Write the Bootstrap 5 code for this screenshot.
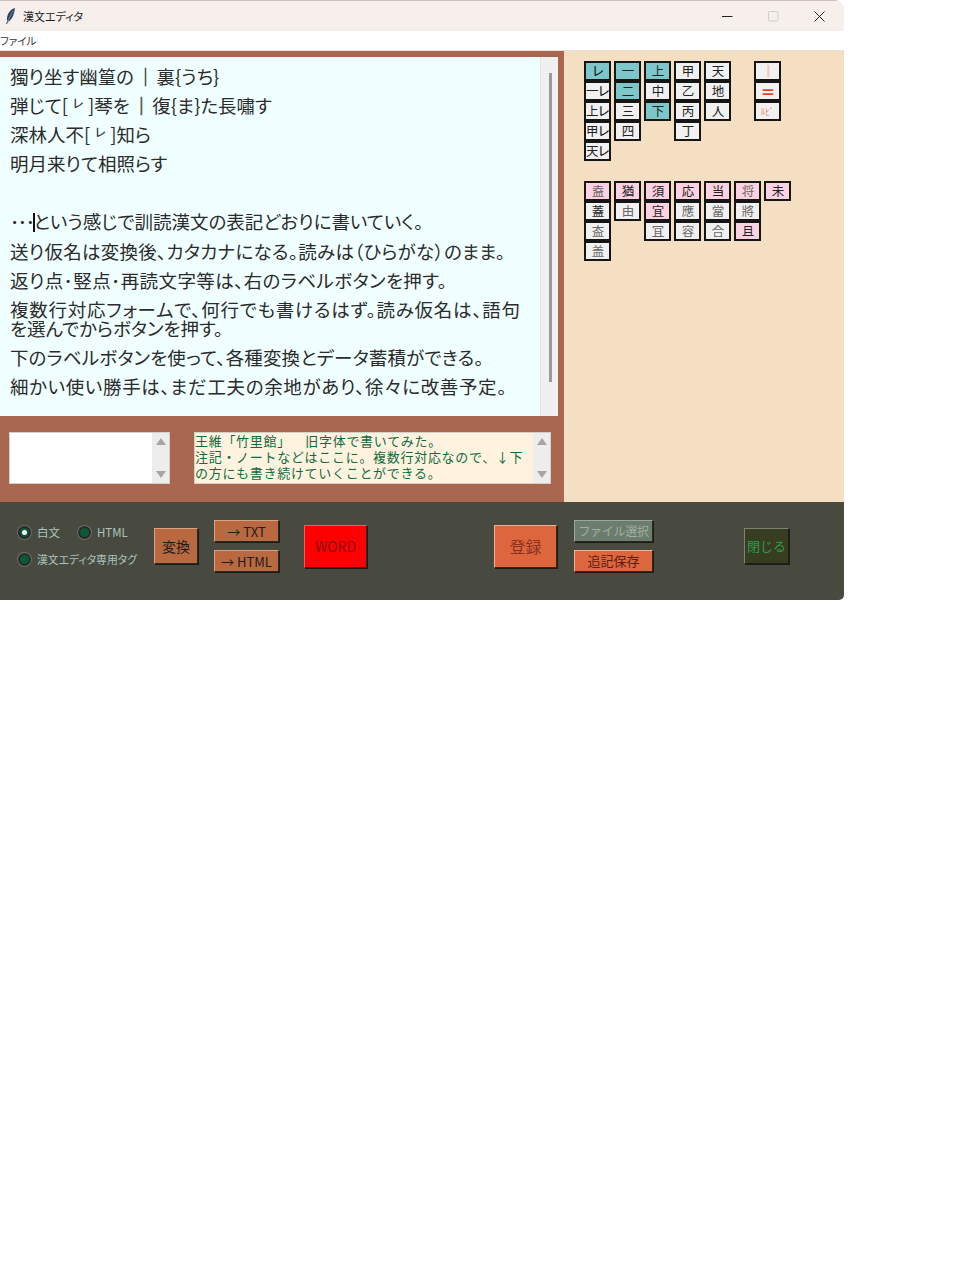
<!DOCTYPE html>
<html lang="ja">
<head>
<meta charset="utf-8">
<title>漢文エディタ</title>
<link rel="stylesheet" href="https://cdn.jsdelivr.net/npm/bootstrap@5.3.0/dist/css/bootstrap.min.css">
<style>
html,body{margin:0;background:#fff;font-family:"Noto Sans CJK JP","Liberation Sans",sans-serif;}
.win{width:844px;height:600px;border-top-right-radius:9px;border-bottom-right-radius:5px;overflow:hidden;color:#222;font-feature-settings:"palt";}
.tbar{height:31px;background:#f6efeb;border-top:1px solid #c9c4c0;font-size:11px;color:#222;padding-left:5px;}
.tbar .ttl{margin-left:7px;}
.wctls{margin-right:2px;}
.wctl{width:46px;height:30px;}
.mbar{height:20px;background:#fff;font-size:10.5px;line-height:20px;color:#333;border-bottom:1px solid #e8e0d8;}
.mid{height:451px;background:#a9674f;}
.lpane{width:564px;}
.rpane{width:280px;background:#f5dfc2;padding:10px 0 0 20px;}
.edit{height:359px;margin-top:6px;width:558px;background:#f0ffff;}
.etext{width:540px;padding:10px 0 0 10px;font-size:18.5px;line-height:19px;color:#2b2b2b;}
.etext p{margin:0 0 10px;white-space:nowrap;}
.etext p.blank{height:19px;}
.kten{font-size:12px;vertical-align:5px;line-height:0;margin:0 4px;}
.vbar{color:#333;margin:0 2px;text-shadow:.6px 0 0 #333;}
.dots{letter-spacing:-1.4px;}
.caret{display:inline-block;width:2px;height:19px;background:#111;vertical-align:-3px;margin:0 -1px 0 -1px;}
.ls1{letter-spacing:.25px;}
.ls2{letter-spacing:.4px;}
.ls3{letter-spacing:.75px;}
.ls4{letter-spacing:.15px;}
.ls5{letter-spacing:.64px;}
.sb{width:18px;background:#f0f0f0;border-left:1px solid #e6e6e6;}
.thumb{width:3px;height:309px;background:#9b9b9b;margin:16px 0 0 8px;}
.lower{padding:16px 7px 0 9px;gap:24px;}
.tbox{height:52px;border:1px solid #d4cfc8;}
.tbox-a{width:161px;background:#fff;}
.tbox-b{width:357px;background:#fff3df;}
.tbox .inner{padding:0;font-size:13px;line-height:16px;color:#0d6b41;white-space:pre;letter-spacing:.7px;font-feature-settings:normal;}
.vsb{width:17px;background:#ededed;padding:5px 0;}
.tri-u,.tri-d{width:0;height:0;border-left:5px solid transparent;border-right:5px solid transparent;}
.tri-u{border-bottom:7px solid #a6a6a6;}
.tri-d{border-top:7px solid #a6a6a6;}
.kgroup{gap:3px;align-items:flex-start;}
.kcol{display:flex;flex-direction:column;width:27px;}
.kcol.kgap{margin-left:20px;}
.kk{display:flex;align-items:center;justify-content:center;height:20px;background:#f1f1f1;border:2px solid #151515;font-size:12.5px;line-height:1;color:#222;white-space:nowrap;padding:0;letter-spacing:-1px;font-feature-settings:normal;}
.teal{background:#7dc7cb;}
.pnk{background:#fcd2e2;}
.gry{color:#666;}
.red1{color:#f28a7d;text-shadow:1px 0 0 #f6a99d;}
.red2{color:#f0402a;font-weight:900;font-size:15px;}
.red3{color:#f07f70;font-size:9px;letter-spacing:0;}
.group2{margin-top:20px;}
.foot{height:98px;background:#484a40;padding:0 0 10px 18px;}
.bv{border:1px solid;border-color:#d9a084 #2a2a22 #2a2a22 #d9a084;box-shadow:1px 1px 0 #1d1d18;padding:0;border-radius:0;white-space:nowrap;}
.opts{width:136px;color:#a9c4bd;font-size:11.5px;white-space:nowrap;}
.opt-tag{font-size:10.8px;}
.optrow{height:27px;gap:6px;}
.rad{appearance:none;width:13px;height:13px;border-radius:50%;background:#0a5a38;border:2px solid #2a2a2a;box-shadow:0 0 0 1px #6b7068;margin:0;flex:none;}
.rad:checked{background:radial-gradient(circle,#fff 0 2px,#0a5a38 3px);}
.rad2{margin-left:12px;}
.b-conv{width:44px;height:36px;background:#b9683f;color:#1c1c1c;font-size:14px;}
.stack{gap:8px;}
.b-s{width:65px;height:22px;background:#b9683f;color:#1c1c1c;font-size:13px;line-height:1;}
.b-word{width:63px;height:43px;background:#fe0000;color:#8a0f10;font-size:14px;border-color:#f25c5c #2a2a22 #2a2a22 #f25c5c;}
.b-reg{width:63px;height:43px;background:#dd663c;color:#8e2f22;font-size:16px;border-color:#eeb298 #2a2a22 #2a2a22 #eeb298;}
.b-file{width:79px;height:22px;background:#6c7c6d;color:#9eb3a1;font-size:12px;letter-spacing:-.3px;border-color:#9aa89a #2a2a22 #2a2a22 #9aa89a;}
.b-add{width:79px;height:22px;background:#dd663c;color:#5d1d15;font-size:13px;border-color:#eeb298 #2a2a22 #2a2a22 #eeb298;}
.b-close{width:45px;height:36px;background:#363d20;color:#2f9a4f;font-size:13px;border-color:#7d8273 #20201a #20201a #7d8273;}
.sp1{margin-left:16px;}
.sp2{margin-left:25px;}
.sp3{margin-left:127px;}
.sp4{margin-left:17px;}
.sp5{margin-left:91px;}
</style>
</head>
<body>
<div class="win d-flex flex-column">
  <div class="tbar d-flex align-items-center">
    <svg width="11" height="18" viewBox="0 0 11 18"><path d="M10 1C6 2 2.500 6 2 11c-.2 1.500 0 2.500.5 3L1 17h1l1.300-2.500C6 14 9 9 10 1z" fill="#2d4a68"/><path d="M8 4 3 14" stroke="#9ab" stroke-width=".6"/></svg>
    <span class="ttl">漢文エディタ</span>
    <div class="ms-auto d-flex wctls">
      <div class="wctl d-flex align-items-center justify-content-center"><svg width="11" height="11" viewBox="0 0 11 11"><path d="M0 5.500h10.500" stroke="#222" stroke-width="1"/></svg></div>
      <div class="wctl d-flex align-items-center justify-content-center"><svg width="11" height="11" viewBox="0 0 11 11"><rect x=".5" y=".5" width="9.500" height="9.500" rx="1.200" fill="none" stroke="#cfcbc8"/></svg></div>
      <div class="wctl d-flex align-items-center justify-content-center"><svg width="11" height="11" viewBox="0 0 11 11"><path d="M.5.500l10 10M10.500.5l-10 10" stroke="#222" stroke-width="1"/></svg></div>
    </div>
  </div>
  <div class="mbar">ファイル</div>
  <div class="mid d-flex">
    <div class="lpane d-flex flex-column">
      <div class="edit d-flex">
        <div class="etext">
          <p>獨り坐す幽篁の<span class="vbar">｜</span>裏{うち}</p>
          <p>弾じて[<span class="kten">㆑</span>]琴を<span class="vbar">｜</span>復{ま}た長嘯す</p>
          <p>深林人不[<span class="kten">㆑</span>]知ら</p>
          <p>明月来りて相照らす</p>
          <p class="blank"></p>
          <p><span class="dots">･･･</span><span class="caret"></span>という感じで訓読漢文の表記どおりに書いていく。</p>
          <p class="ls1">送り仮名は変換後、カタカナになる。読みは（ひらがな）のまま。</p>
          <p class="ls2">返り点･竪点･再読文字等は、右のラベルボタンを押す。</p>
          <p><span class="ls3">複数行対応フォームで、何行でも書けるはず。読み仮名は、語句</span><br>を選んでからボタンを押す。</p>
          <p class="ls4">下のラベルボタンを使って、各種変換とデータ蓄積ができる。</p>
          <p class="ls5">細かい使い勝手は、まだ工夫の余地があり、徐々に改善予定。</p>
        </div>
        <div class="sb flex-grow-1"><div class="thumb"></div></div>
      </div>
      <div class="lower d-flex">
        <div class="tbox tbox-a d-flex">
          <div class="flex-grow-1"></div>
          <div class="vsb d-flex flex-column align-items-center justify-content-between"><div class="tri-u"></div><div class="tri-d"></div></div>
        </div>
        <div class="tbox tbox-b d-flex">
          <div class="inner flex-grow-1">王維「竹里館」　  旧字体で書いてみた。
注記・ノートなどはここに。複数行対応なので、↓下
の方にも書き続けていくことができる。</div>
          <div class="vsb d-flex flex-column align-items-center justify-content-between"><div class="tri-u"></div><div class="tri-d"></div></div>
        </div>
      </div>
    </div>
    <div class="rpane">
      <div class="d-flex kgroup">
        <div class="kcol"><span class="kk teal">㆑</span><span class="kk">一㆑</span><span class="kk">上㆑</span><span class="kk">甲㆑</span><span class="kk">天㆑</span></div>
        <div class="kcol"><span class="kk teal">一</span><span class="kk teal">二</span><span class="kk">三</span><span class="kk">四</span></div>
        <div class="kcol"><span class="kk teal">上</span><span class="kk">中</span><span class="kk teal">下</span></div>
        <div class="kcol"><span class="kk">甲</span><span class="kk">乙</span><span class="kk">丙</span><span class="kk">丁</span></div>
        <div class="kcol"><span class="kk">天</span><span class="kk">地</span><span class="kk">人</span></div>
        <div class="kcol kgap"><span class="kk red1">｜</span><span class="kk red2">＝</span><span class="kk red3">ﾙﾋﾞ</span></div>
      </div>
      <div class="d-flex kgroup group2">
        <div class="kcol"><span class="kk pnk gry">盍</span><span class="kk">蓋</span><span class="kk gry">盇</span><span class="kk gry">盖</span></div>
        <div class="kcol"><span class="kk pnk">猶</span><span class="kk gry">由</span></div>
        <div class="kcol"><span class="kk pnk">須</span><span class="kk pnk">宜</span><span class="kk gry">冝</span></div>
        <div class="kcol"><span class="kk pnk">応</span><span class="kk gry">應</span><span class="kk gry">容</span></div>
        <div class="kcol"><span class="kk pnk">当</span><span class="kk gry">當</span><span class="kk gry">合</span></div>
        <div class="kcol"><span class="kk pnk gry">将</span><span class="kk gry">將</span><span class="kk pnk">且</span></div>
        <div class="kcol"><span class="kk pnk">未</span></div>
      </div>
    </div>
  </div>
  <div class="foot d-flex align-items-center">
    <div class="opts d-flex flex-column">
      <div class="d-flex align-items-center optrow"><input class="rad" type="radio" name="fmt" checked><span>白文</span><input class="rad rad2" type="radio" name="fmt"><span>HTML</span></div>
      <div class="d-flex align-items-center optrow"><input class="rad" type="radio" name="fmt"><span class="opt-tag">漢文エディタ専用タグ</span></div>
    </div>
    <button class="btn bv b-conv">変換</button>
    <div class="d-flex flex-column stack sp1">
      <button class="btn bv b-s">→ TXT</button>
      <button class="btn bv b-s">→ HTML</button>
    </div>
    <button class="btn bv b-word sp2">WORD</button>
    <button class="btn bv b-reg sp3">登録</button>
    <div class="d-flex flex-column stack sp4">
      <button class="btn bv b-file">ファイル選択</button>
      <button class="btn bv b-add">追記保存</button>
    </div>
    <button class="btn bv b-close sp5">閉じる</button>
  </div>
</div>
<script src="https://cdn.jsdelivr.net/npm/bootstrap@5.3.0/dist/js/bootstrap.bundle.min.js"></script>
</body>
</html>
